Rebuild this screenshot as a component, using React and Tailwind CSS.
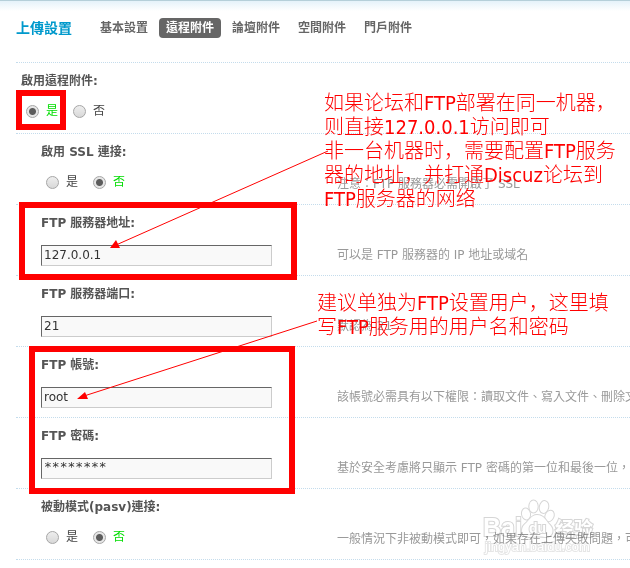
const tabs = ['基本設置', '遠程附件', '論壇附件', '空間附件', '門戶附件'];

function Radio({ name, label, checked }) {
  return (
    <label className={'flex items-center gap-[7px] ' + (checked ? 'text-[#00dd00]' : 'text-[#444]')}>
      <input
        type="radio"
        name={name}
        defaultChecked={checked}
        className="size-[13px] appearance-none rounded-full border border-[#a6a6a6] bg-linear-to-b from-[#eee] to-[#d8d8d8] checked:bg-[radial-gradient(circle,#5c5c5c_3px,#e6e6e6_4px)]"
      />
      {label}
    </label>
  );
}

function YesNo({ name, label, value }) {
  return (
    <div role="radiogroup" aria-label={label} className="flex gap-[15px] pb-1 pl-[5px]">
      <Radio name={name} label="是" checked={value === 'yes'} />
      <Radio name={name} label="否" checked={value === 'no'} />
    </div>
  );
}

function Field({ id, value, mono }) {
  return (
    <input
      id={id}
      type="text"
      defaultValue={value}
      className={
        'block h-[21px] w-[231px] border border-t-[#666] border-r-[#ccc] border-b-[#ccc] border-l-[#666] bg-[#f9f9f9] px-[2px] text-[#333] outline-none ' +
        (mono ? "pb-1 font-['DejaVu_Sans_Mono',monospace] text-[13px]" : 'text-[12px]')
      }
    />
  );
}

function Row({ label, htmlFor, tip, top, children }) {
  const Caption = htmlFor ? 'label' : 'div';
  return (
    <div className={'border-t border-dotted border-[#c4dcec] pt-[10px] pb-2 ' + (top ? 'pl-[5px]' : 'pl-[25px]')}>
      <Caption htmlFor={htmlFor} className="block h-4 leading-4 font-bold text-[#555]">
        {label}
      </Caption>
      <div className="mt-3 flex h-6 items-center">
        <div className="w-[296px] shrink-0">{children}</div>
        <p className="text-[#999]">{tip}</p>
      </div>
    </div>
  );
}

function Watermark() {
  return (
    <svg
      className="pointer-events-none absolute top-[495px] left-[480px] mix-blend-multiply"
      width="120"
      height="62"
      viewBox="0 0 120 62"
      fill="#fff"
      stroke="#d6d6d6"
      style={{ paintOrder: 'stroke' }}
    >
      <g strokeWidth="2">
        <ellipse cx="46" cy="19" rx="4" ry="5.5" transform="rotate(-10 46 19)" />
        <ellipse cx="53.5" cy="11.500" rx="4.2" ry="6" />
        <ellipse cx="64" cy="12" rx="4.2" ry="6" transform="rotate(12 64 12)" />
        <ellipse cx="69.5" cy="21" rx="4" ry="5.500" transform="rotate(25 69.5 21)" />
        <path d="M57 20c-6 0-8 6-12 9s-5 13 4 13c4 0 9-1 16 0 9 0 9-8 5-12s-6-10-13-10z" />
      </g>
      <g strokeWidth="2" fontFamily="'Liberation Sans','Noto Sans CJK SC',sans-serif" fontWeight="bold">
        <text x="3" y="41" fontSize="25">Bai</text>
        <text x="49" y="38" fontSize="14">du</text>
        <text x="75" y="41" fontSize="19">经验</text>
      </g>
      <text x="5" y="56" fontSize="13" fontFamily="'Liberation Sans',sans-serif" strokeWidth="2" stroke="#e6e6e6">
        jingyan.baidu.com
      </text>
    </svg>
  );
}

const note =
  "absolute font-['DejaVu_Sans_Condensed','Noto_Sans_CJK_SC',sans-serif] text-[20px] leading-6 font-light text-[#f00]";

export default function App() {
  return (
    <div className="relative overflow-hidden bg-white font-['DejaVu_Sans','Noto_Sans_CJK_TC',sans-serif] text-[12px] leading-4 whitespace-nowrap">
      <header className="h-[62px] border-t border-[#b5cfd9] bg-linear-to-b from-[#e5f2fa] to-white to-[10px] pt-[17px] pl-4">
        <nav className="flex items-center">
          <h1 className="mr-[21px] text-[14px] font-bold text-[#0099cc]">上傳設置</h1>
          <ul className="flex gap-1">
            {tabs.map((t) => (
              <li key={t}>
                <a
                  href="#"
                  className={
                    'block h-5 rounded-[4px] px-[7px] leading-5 font-bold ' +
                    (t === '遠程附件' ? 'bg-[#666] text-white' : 'text-[#666]')
                  }
                >
                  {t}
                </a>
              </li>
            ))}
          </ul>
        </nav>
      </header>

      <form className="ml-4">
        <Row label="啟用遠程附件:" top>
          <YesNo name="remote" label="啟用遠程附件" value="yes" />
        </Row>
        <Row label="啟用 SSL 連接:" tip="注意：FTP 服務器必需開啟了 SSL">
          <YesNo name="ssl" label="啟用 SSL 連接" value="no" />
        </Row>
        <Row label="FTP 服務器地址:" htmlFor="host" tip="可以是 FTP 服務器的 IP 地址或域名">
          <Field id="host" value="127.0.0.1" />
        </Row>
        <Row label="FTP 服務器端口:" htmlFor="port" tip="默認為 21">
          <Field id="port" value="21" />
        </Row>
        <Row label="FTP 帳號:" htmlFor="user" tip="該帳號必需具有以下權限：讀取文件、寫入文件、刪除文件">
          <Field id="user" value="root" />
        </Row>
        <Row label="FTP 密碼:" htmlFor="pass" tip="基於安全考慮將只顯示 FTP 密碼的第一位和最後一位，">
          <Field id="pass" value="********" mono />
        </Row>
        <Row label="被動模式(pasv)連接:" tip="一般情況下非被動模式即可，如果存在上傳失敗問題，可">
          <YesNo name="pasv" label="被動模式(pasv)連接" value="no" />
        </Row>
        <div className="h-[9px] border-t border-dotted border-[#c4dcec]" />
      </form>

      <div className="pointer-events-none absolute top-[90px] left-4 h-10 w-[50px] border-6 border-[#f00]" />
      <div className="pointer-events-none absolute top-[202px] left-[19px] h-[78px] w-[278px] border-6 border-[#f00]" />
      <div className="pointer-events-none absolute top-[346px] left-[29px] h-[148px] w-[266px] border-6 border-[#f00]" />

      <svg className="pointer-events-none absolute top-0 left-0" width="340" height="420" stroke="#f00" fill="#f00">
        <path d="M328 151 116 245M317 321 84 396" />
        <path d="M110 248l6-8 4 8zM77 399l8-7 3 7z" stroke="none" />
      </svg>

      <p className={note + ' top-[91px] left-[324px]'}>
        如果论坛和FTP部署在同一机器，
        <br />
        则直接127.0.0.1访问即可
        <br />
        非一台机器时，需要配置FTP服务
        <br />
        器的地址，并打通Discuz论坛到
        <br />
        FTP服务器的网络
      </p>
      <p className={note + ' top-[291px] left-[317px]'}>
        建议单独为FTP设置用户，这里填
        <br />
        写FTP服务用的用户名和密码
      </p>

      <Watermark />
    </div>
  );
}
